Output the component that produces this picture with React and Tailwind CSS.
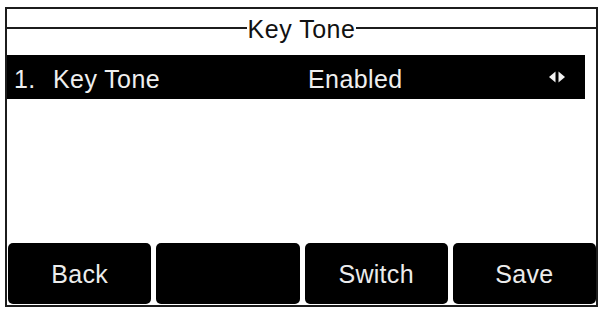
import React from "react";

const font = { fontFamily: '"Liberation Sans", Arial, sans-serif' };

function Arrows() {
  return (
    <svg width="18" height="12" viewBox="0 0 18 12" className="block">
      <polygon points="7.5,0.5 7.5,11.5 1,6" fill="#f2f2f2" />
      <polygon points="10.5,0.5 10.5,11.5 17,6" fill="#f2f2f2" />
    </svg>
  );
}

function SoftKey({ label }) {
  return (
    <div className="bg-black rounded-[5px] flex items-center justify-center pt-[2px] text-[25px] leading-none tracking-[0.3px] text-[#ececec]">
      {label}
    </div>
  );
}

export default function App() {
  return (
    <div
      className="w-[603px] h-[309px] bg-white pt-[7px] pl-[5px] pr-[5px] pb-[2px]"
      style={font}
    >
      <div className="h-full border-2 border-[#1c1c1c] flex flex-col">
        <div className="h-[38px] flex items-center">
          <div className="flex-1 h-[2px] bg-[#1c1c1c]" />
          <div className="px-[1px] pt-[3px] text-[25px] leading-none tracking-[0.5px] text-[#111]">
            Key Tone
          </div>
          <div className="flex-1 h-[2px] bg-[#1c1c1c]" />
        </div>
        <div className="mt-[8px] mr-[11px] h-[44px] bg-black flex items-center pl-[7px] pt-[4px] text-[25px] leading-none tracking-[0.4px] text-[#efefef]">
          <span className="w-[39px]">1.</span>
          <span className="w-[255px]">Key Tone</span>
          <span>Enabled</span>
          <div className="flex-1" />
          <div className="mr-[19px] -mt-[5px]">
            <Arrows />
          </div>
        </div>
        <div className="flex-1" />
        <div className="h-[61px] mb-[1px] pl-[1px] grid grid-cols-4 gap-[5px]">
          <SoftKey label="Back" />
          <SoftKey label="" />
          <SoftKey label="Switch" />
          <SoftKey label="Save" />
        </div>
      </div>
    </div>
  );
}
